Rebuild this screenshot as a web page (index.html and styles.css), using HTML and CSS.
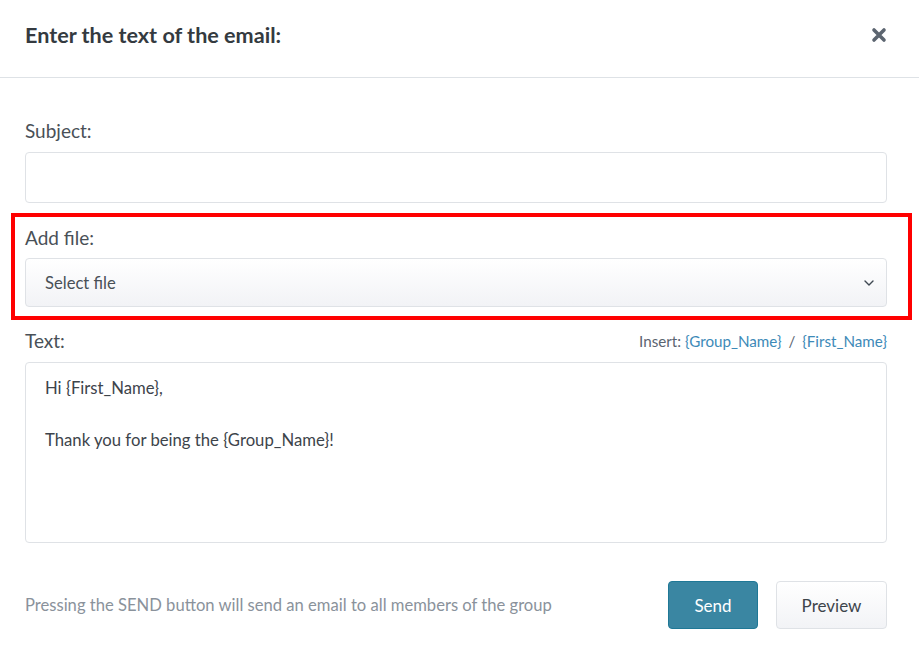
FILE: index.html
```html
<!DOCTYPE html>
<html lang="en">
<head>
<meta charset="utf-8">
<title>Enter the text of the email</title>
<link rel="stylesheet" href="styles.css">
</head>
<body>
<div class="modal">
  <div class="modal-header">
    <h1 class="modal-title">Enter the text of the email:</h1>
    <button class="close" aria-label="Close">
      <svg width="16" height="16" viewBox="0 0 16 16"><path d="M3 3 L13 13 M13 3 L3 13" stroke="#5c6570" stroke-width="3.6" stroke-linecap="round"/></svg>
    </button>
  </div>
  <div class="modal-body">
    <div class="group first">
      <label class="label">Subject:</label>
      <div class="input"></div>
    </div>
    <div class="highlight">
      <label class="label">Add file:</label>
      <div class="select">
        <span>Select file</span>
        <svg class="chev" width="12" height="8" viewBox="0 0 12 8"><path d="M2 2 L6 6 L10 2" fill="none" stroke="#3f4852" stroke-width="1.4" stroke-linecap="round" stroke-linejoin="round"/></svg>
      </div>
    </div>
    <div class="group text-group">
      <div class="label-row">
        <label class="label">Text:</label>
        <div class="insert">Insert: <a>{Group_Name}</a> <span class="sep">/</span> <a>{First_Name}</a></div>
      </div>
      <div class="textarea">Hi {First_Name},<br><br>Thank you for being the {Group_Name}!</div>
    </div>
    <div class="footer">
      <p class="note">Pressing the SEND button will send an email to all members of the group</p>
      <div class="buttons">
        <button class="btn btn-primary">Send</button>
        <button class="btn btn-light">Preview</button>
      </div>
    </div>
  </div>
</div>
</body>
</html>
```

FILE: styles.css
```css
* { box-sizing: border-box; }
html, body { margin: 0; padding: 0; background: #fff; }
body {
  font-family: "Lato", "Noto Sans", sans-serif;
  color: #495057;
  width: 919px;
  height: 656px;
  overflow: hidden;
}
.modal-header {
  height: 78px;
  border-bottom: 1px solid #dee2e6;
  display: flex;
  align-items: center;
  justify-content: space-between;
  padding: 0 32px 8px 25px;
}
.modal-title {
  margin: 0;
  font-size: 21.6px;
  font-weight: 700;
  color: #343a40;
}
.close {
  border: 0;
  background: none;
  padding: 0;
  margin-right: 0;
  width: 16px;
  height: 16px;
  display: flex;
}
.modal-body { padding: 0 32px 0 25px; }
.label {
  display: block;
  font-size: 19px;
  line-height: 27px;
  color: #495057;
}
.group.first { margin-top: 39px; }
.group .label, .highlight .label { margin-bottom: 8px; }
.input {
  height: 51px;
  border: 1px solid #dfe2e6;
  border-radius: 4px;
  background: #fff;
}
.highlight {
  margin: 10px -25px 0 -14px;
  border: 4px solid #ff0000;
  padding: 7px 21px 9px 10px;
}
.highlight .label { margin-bottom: 7px; }
.select {
  height: 49px;
  border: 1px solid #dfe2e6;
  border-radius: 4px;
  background: linear-gradient(#ffffff, #f2f3f6);
  display: flex;
  align-items: center;
  justify-content: space-between;
  padding: 0 11px 0 19px;
  font-size: 16.6px;
  color: #495057;
}
.text-group { margin-top: 7px; }
.label-row {
  display: flex;
  justify-content: space-between;
  align-items: center;
  margin-bottom: 8px;
}
.label-row .label { margin-bottom: 0; }
.insert {
  font-size: 15.2px;
  color: #5a6470;
}
.insert a { color: #3d8ab8; }
.insert .sep { margin: 0 3px; color: #5a6470; }
.textarea {
  height: 181px;
  border: 1px solid #dfe2e6;
  border-radius: 4px;
  padding: 12px 19px;
  font-size: 16.7px;
  line-height: 26px;
  color: #3d444b;
}
.footer {
  margin-top: 38px;
  display: flex;
  align-items: center;
  justify-content: space-between;
}
.note {
  margin: 0;
  font-size: 16.6px;
  color: #8a929b;
}
.buttons { display: flex; gap: 18px; }
.btn {
  height: 48px;
  border-radius: 4px;
  font-family: inherit;
  font-size: 17px;
  padding: 0;
}
.btn-primary {
  width: 90px;
  background: #3a86a2;
  border: 1px solid #1f7896;
  color: #fff;
}
.btn-light {
  width: 111px;
  background: linear-gradient(#ffffff, #f2f3f6);
  border: 1px solid #dfe2e6;
  color: #3d444b;
}
```
